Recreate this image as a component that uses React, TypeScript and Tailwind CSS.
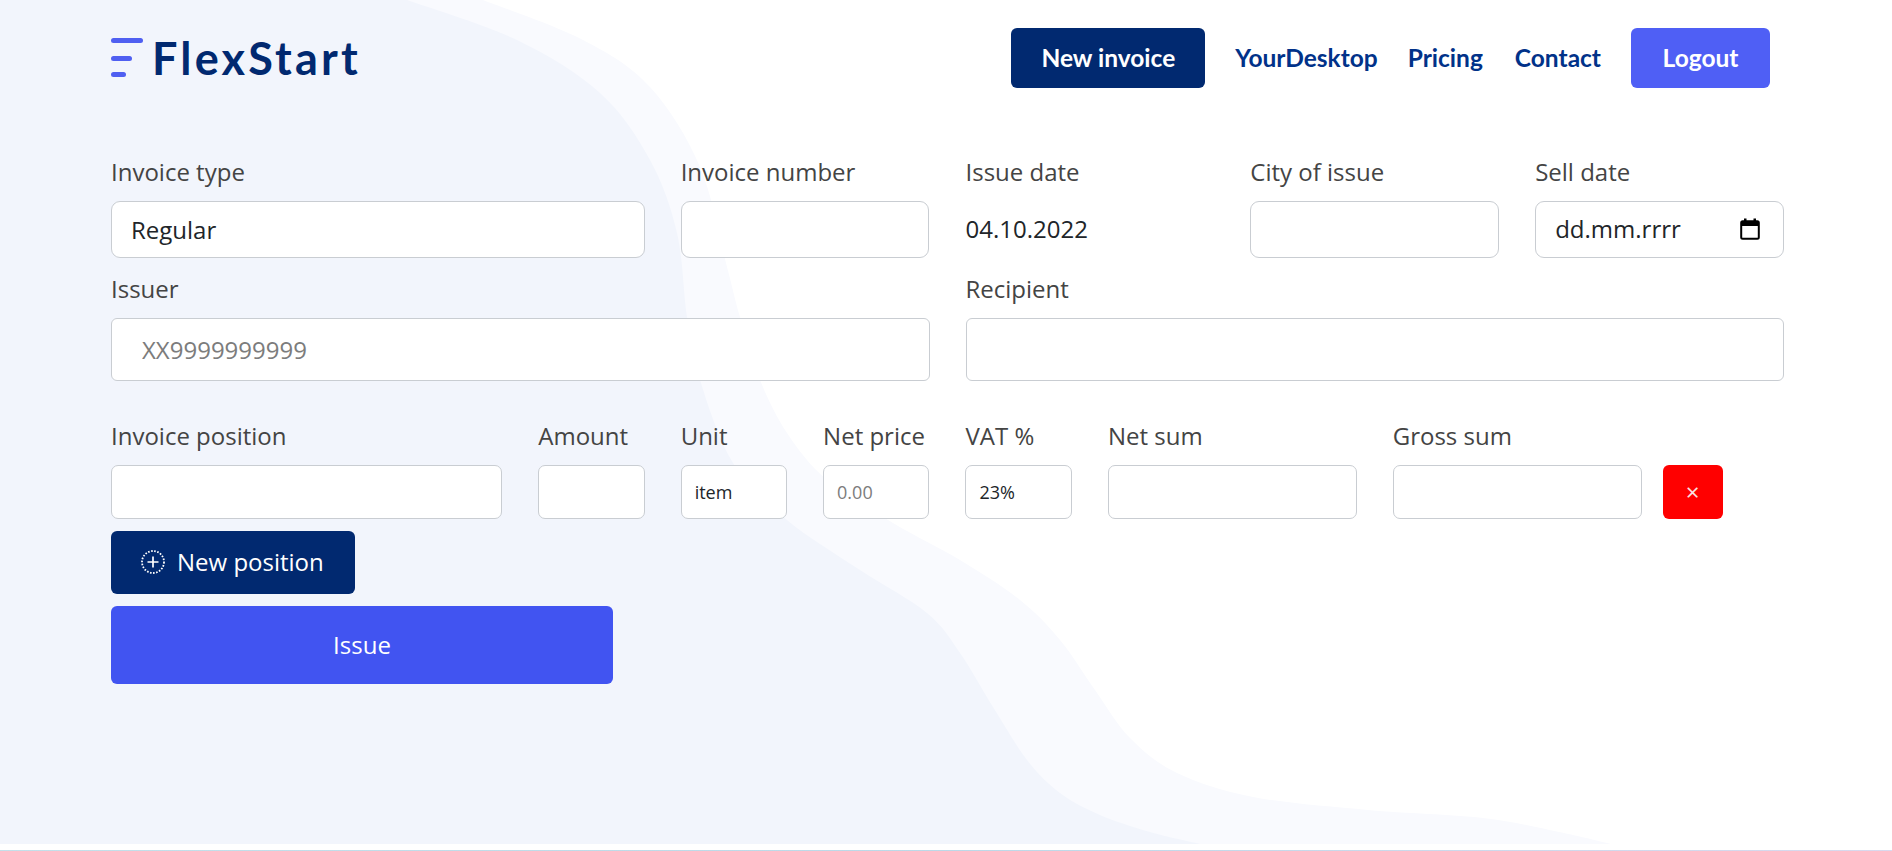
import { ReactNode } from 'react';

const outerBlob: number[][] = [
  [483, 0], [583, 40], [650, 87], [700, 167], [727, 267], [740, 317], [760, 380], [787, 433], [827, 480],
  [893, 523], [960, 560], [1020, 600], [1060, 640], [1095, 690], [1130, 738], [1177, 773], [1253, 797],
  [1368, 810], [1483, 818], [1559, 832], [1611, 844],
];
const innerBlob: number[][] = [
  [407, 0], [517, 40], [600, 93], [650, 160], [677, 233], [687, 317], [700, 380], [733, 463], [787, 520],
  [860, 570], [927, 613], [960, 653], [993, 707], [1027, 760], [1060, 793], [1100, 815], [1150, 832], [1200, 844],
];

// catmull-rom through the traced edge points
function blobPath(pts: number[][]) {
  let d = `M0 0 L${pts[0][0]} ${pts[0][1]}`;
  for (let i = 0; i < pts.length - 1; i++) {
    const p0 = pts[i - 1] ?? pts[i];
    const p1 = pts[i];
    const p2 = pts[i + 1];
    const p3 = pts[i + 2] ?? p2;
    d += ` C${p1[0] + (p2[0] - p0[0]) / 6} ${p1[1] + (p2[1] - p0[1]) / 6} ${p2[0] - (p3[0] - p1[0]) / 6} ${p2[1] - (p3[1] - p1[1]) / 6} ${p2[0]} ${p2[1]}`;
  }
  return d + ' L0 844 Z';
}

function Field({ label, span, children }: { label: string; span: string; children: ReactNode }) {
  return (
    <div className={span}>
      <label className="block h-[29px] mb-[14px] text-[24px] leading-[27px] text-[#444444] whitespace-nowrap">{label}</label>
      {children}
    </div>
  );
}

const inputMd = 'block w-full h-[57px] pl-[19px] pr-[18px] pb-[1px] bg-white border border-[#c9cdd2] rounded-[9px] text-[24px] text-[#212529] outline-none';
const inputLg = 'block w-full h-[63px] px-[30px] bg-white border border-[#c9cdd2] rounded-[6px] text-[24px] text-[#212529] outline-none placeholder:text-[#7c7c7c]';
const inputSm = 'block w-full h-[54px] px-[13px] bg-white border border-[#c9cdd2] rounded-[7px] text-[18px] text-[#212529] outline-none placeholder:text-[#7c7c7c]';

export default function App() {
  return (
    <div className="w-[1892px] h-[851px] overflow-hidden bg-white font-['Open_Sans',sans-serif]">
      <div className="relative h-[844px] bg-white">
        <svg className="absolute inset-0" width="1892" height="844" viewBox="0 0 1892 844">
          <path d={blobPath(outerBlob)} fill="#f9fafe" />
          <path d={blobPath(innerBlob)} fill="#f2f5fc" />
        </svg>

        <div className="relative pl-[111px]">
          <header className="flex items-center justify-between w-[1659px] pt-[28px]">
            <a className="flex items-center h-[60px]">
              <svg width="32" height="40" viewBox="0 0 32 40" className="mt-[-1px]">
                <rect x="0" y="0" width="32" height="5" rx="2.5" fill="#4f5ff1" />
                <rect x="0" y="18" width="21" height="5" rx="2.5" fill="#4f5ff1" />
                <rect x="0" y="34" width="15" height="5" rx="2.5" fill="#4f5ff1" />
              </svg>
              <span className="ml-[9px] text-[45px] leading-none font-bold tracking-[3.2px] text-[#012970] font-['Lato',sans-serif]">FlexStart</span>
            </a>
            <nav className="flex items-center font-['Lato',sans-serif] text-[24.5px] font-bold">
              <a className="flex items-center justify-center w-[194px] h-[60px] rounded-[6px] bg-[#012970] text-white">New invoice</a>
              <a className="ml-[30px] text-[#013289]">YourDesktop</a>
              <a className="ml-[30px] text-[#013289]">Pricing</a>
              <a className="ml-[32px] text-[#013289]">Contact</a>
              <a className="ml-[30px] flex items-center justify-center w-[139px] h-[60px] rounded-[6px] bg-[#4f5ff5] text-white">Logout</a>
            </nav>
          </header>

          <form className="mt-[70px] w-[1673px]">
            <div className="grid grid-cols-12 gap-x-[36px]">
              <Field label="Invoice type" span="col-span-4">
                <input className={inputMd} defaultValue="Regular" />
              </Field>
              <Field label="Invoice number" span="col-span-2">
                <input className={inputMd} />
              </Field>
              <Field label="Issue date" span="col-span-2">
                <div className="h-[57px] pb-[1px] flex items-center text-[24px] text-[#212529]">04.10.2022</div>
              </Field>
              <Field label="City of issue" span="col-span-2">
                <input className={inputMd} />
              </Field>
              <Field label="Sell date" span="col-span-2">
                <div className={`${inputMd} flex items-center justify-between !pr-[23px]`}>
                  <span>dd.mm.rrrr</span>
                  <svg width="20" height="22" viewBox="0 0 20 22" fill="none">
                    <rect x="1.2" y="3.2" width="17.6" height="17.6" rx="1.5" stroke="#000" strokeWidth="2" />
                    <rect x="1" y="3" width="18" height="5" fill="#000" />
                    <rect x="4" y="0.5" width="2.5" height="4" fill="#000" />
                    <rect x="13.5" y="0.5" width="2.5" height="4" fill="#000" />
                  </svg>
                </div>
              </Field>
            </div>

            <div className="grid grid-cols-12 gap-x-[36px] mt-[17px]">
              <Field label="Issuer" span="col-span-6">
                <input className={inputLg} placeholder="XX9999999999" />
              </Field>
              <Field label="Recipient" span="col-span-6">
                <input className={inputLg} />
              </Field>
            </div>

            <div className="grid grid-cols-12 gap-x-[36px] mt-[41px]">
              <Field label="Invoice position" span="col-span-3">
                <input className={inputSm} />
              </Field>
              <Field label="Amount" span="col-span-1">
                <input className={inputSm} />
              </Field>
              <Field label="Unit" span="col-span-1">
                <input className={inputSm} defaultValue="item" />
              </Field>
              <Field label="Net price" span="col-span-1">
                <input className={inputSm} placeholder="0.00" />
              </Field>
              <Field label="VAT %" span="col-span-1">
                <input className={inputSm} defaultValue="23%" />
              </Field>
              <Field label="Net sum" span="col-span-2">
                <input className={inputSm} />
              </Field>
              <Field label="Gross sum" span="col-span-2">
                <input className={inputSm} />
              </Field>
              <div className="col-span-1 self-end -ml-[15px]">
                <button type="button" className="flex items-center justify-center w-[60px] h-[54px] rounded-[6px] bg-[#ff0000] text-[#fbe3e3] text-[24px]">×</button>
              </div>
            </div>

            <button type="button" className="flex items-center mt-[12px] w-[244px] h-[63px] pl-[30px] pb-[1px] rounded-[6px] bg-[#012970] text-white text-[24px]">
              <svg width="24" height="24" viewBox="0 0 24 24" fill="none" stroke="#fff" className="mr-[12px]">
                <circle cx="12" cy="12" r="11" strokeWidth="1.8" strokeDasharray="1.6 1.5" />
                <path d="M12 6.5v11M6.5 12h11" strokeWidth="1.7" />
              </svg>
              New position
            </button>
            <button type="button" className="block mt-[12px] w-[502px] h-[78px] rounded-[6px] bg-[#4154f1] text-white text-[24px]">Issue</button>
          </form>
        </div>
      </div>
      <div className="h-[6px] bg-white" />
      <div className="h-[1px] bg-gradient-to-r from-[#c4e0ea] via-[#bcd9e8] to-[#d9d9ee]" />
    </div>
  );
}
